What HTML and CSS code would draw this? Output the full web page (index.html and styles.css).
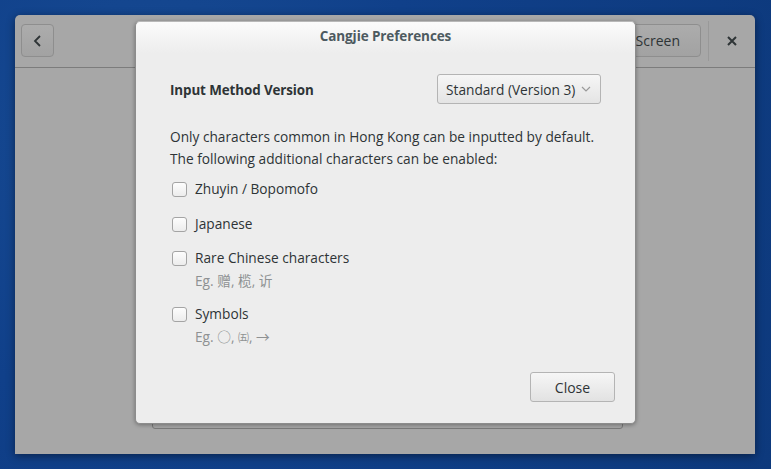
FILE: index.html
```html
<!DOCTYPE html>
<html>
<head>
<meta charset="utf-8">
<link rel="stylesheet" href="styles.css">
</head>
<body>
<div class="desktop">
  <div class="app">
    <div class="app-header">
      <button class="hbtn back-btn" aria-label="Back">
        <svg width="12" height="14" viewBox="0 0 12 14"><path d="M8 2 L3 7 L8 12" fill="none" stroke="#2e3436" stroke-width="1.8"/></svg>
      </button>
      <div class="spacer"></div>
      <button class="hbtn screen-btn">Full Screen</button>
      <div class="hsep"></div>
      <div class="close-x">
        <svg width="10" height="10" viewBox="0 0 10 10"><path d="M1 1 L9 9 M9 1 L1 9" stroke="#2e3436" stroke-width="2"/></svg>
      </div>
    </div>
    <div class="app-body">
      <div class="frame">
        <div class="frame-row"></div>
      </div>
    </div>
  </div>

  <div class="dialog">
    <div class="dialog-title">Cangjie Preferences</div>
    <div class="dialog-content">
      <div class="version-row">
        <span class="bold-label">Input Method Version</span>
        <div class="combo">
          <span>Standard (Version 3)</span>
          <svg width="10" height="6" viewBox="0 0 10 6"><path d="M1 1 L5 5 L9 1" fill="none" stroke="#9a9a9a" stroke-width="1.2"/></svg>
        </div>
      </div>
      <p class="intro">Only characters common in Hong Kong can be inputted by default.<br>The following additional characters can be enabled:</p>
      <div class="options">
        <div class="option first">
          <label class="check-row"><span class="checkbox"></span>Zhuyin / Bopomofo</label>
        </div>
        <div class="option">
          <label class="check-row"><span class="checkbox"></span>Japanese</label>
        </div>
        <div class="option">
          <label class="check-row"><span class="checkbox"></span>Rare Chinese characters</label>
          <div class="example">Eg. 赠, 榄, 䜣</div>
        </div>
        <div class="option">
          <label class="check-row"><span class="checkbox"></span>Symbols</label>
          <div class="example">Eg. ○, <span class="small">㈤</span>, →</div>
        </div>
      </div>
      <div class="actions">
        <button class="close-btn">Close</button>
      </div>
    </div>
  </div>
</div>
</body>
</html>
```

FILE: styles.css
```css
html, body {
  margin: 0;
  padding: 0;
}
body {
  width: 771px;
  height: 469px;
  overflow: hidden;
  font-family: "Open Sans", "Noto Sans CJK SC", sans-serif;
  font-size: 13.7px;
  color: #2e3436;
  background: radial-gradient(circle at 20% 30%, #184c94 0%, #10408a 40%, #0d397c 100%);
}
.desktop {
  position: relative;
  width: 771px;
  height: 469px;
  padding: 15px 16px 15px 15px;
  box-sizing: border-box;
}
.app {
  width: 740px;
  height: 439px;
  background: #a7a7a7;
  border-radius: 5px 5px 0 0;
  box-shadow: 0 2px 8px rgba(0,0,0,0.45);
  display: flex;
  flex-direction: column;
}
.app-header {
  height: 53px;
  box-sizing: border-box;
  border-bottom: 1px solid #7c7c7c;
  display: flex;
  align-items: center;
  padding: 0 0 0 6px;
}
.hbtn {
  height: 33px;
  box-sizing: border-box;
  border: 1px solid #8e8e8e;
  border-radius: 4px;
  background: linear-gradient(#acacac, #a2a2a2);
  font-family: inherit;
  font-size: 14px;
  color: #2e3436;
  padding: 0;
  margin-top: -1px;
}
.back-btn {
  width: 33px;
  display: flex;
  align-items: center;
  justify-content: center;
}
.spacer { flex: 1; }
.screen-btn {
  width: 140px;
  text-align: right;
  padding-right: 20px;
}
.hsep {
  width: 1px;
  height: 40px;
  background: #999;
  margin-left: 7px;
}
.close-x {
  width: 46px;
  display: flex;
  justify-content: center;
  align-items: center;
}
.app-body {
  flex: 1;
  display: flex;
  justify-content: center;
  align-items: flex-end;
  padding-bottom: 25px;
}
.frame {
  width: 471px;
  height: 120px;
  box-sizing: border-box;
  border: 1px solid #7a7a7a;
  border-radius: 0 0 3px 3px;
  margin-left: 5px;
  display: flex;
  align-items: flex-end;
}
.frame-row {
  flex: 1;
  height: 4px;
  border-top: 1px solid #8a8a8a;
}

/* dialog overlays the parent window */
.dialog {
  position: absolute;
  left: 135px;
  top: 21px;
  width: 501px;
  height: 403px;
  box-sizing: border-box;
  background: #ededed;
  border: 1px solid #8c8c8c;
  border-top-color: #b8b8b8;
  border-radius: 5px;
  box-shadow: 0 1px 4px rgba(0,0,0,0.35);
  display: flex;
  flex-direction: column;
}
.dialog-title {
  height: 31px;
  flex: none;
  box-sizing: border-box;
  padding-top: 4px;
  text-align: center;
  font-weight: bold;
  font-size: 13.5px;
  letter-spacing: -0.1px;
  color: #4d5a60;
  background: linear-gradient(#fbfbfb, #ededed);
  border-radius: 5px 5px 0 0;
  line-height: 20px;
}
.dialog-content {
  flex: 1;
  display: flex;
  flex-direction: column;
  padding: 21px 34px 21px 34px;
}
.version-row {
  display: flex;
  align-items: center;
  justify-content: space-between;
}
.bold-label {
  font-weight: bold;
  font-size: 13.4px;
  letter-spacing: -0.1px;
  padding-top: 2px;
}
.combo {
  width: 164px;
  height: 30px;
  box-sizing: border-box;
  border: 1px solid #b4b4b4;
  border-radius: 3px;
  background: linear-gradient(#f6f6f6, #e4e4e4);
  display: flex;
  align-items: center;
  justify-content: space-between;
  padding: 0 9px 0 8px;
}
.intro {
  margin: 22px 0 0 0;
  line-height: 22px;
  white-space: nowrap;
}
.options {
  margin-top: 8px;
  display: flex;
  flex-direction: column;
  gap: 12px;
}
.option.first {
  margin-bottom: 1px;
}
.check-row {
  display: flex;
  align-items: center;
  line-height: 22px;
}
.checkbox {
  width: 15px;
  height: 15px;
  box-sizing: border-box;
  border: 1px solid #a4a4a4;
  border-radius: 3px;
  background: linear-gradient(#fdfdfd, #ececec);
  margin: 0 8px 0 2px;
}
.example {
  color: #8e9192;
  line-height: 20px;
  margin: 2px 0 0 25px;
}
.example .small {
  font-size: 11px;
}
.actions {
  margin-top: auto;
  display: flex;
  justify-content: flex-end;
  margin-right: -14px;
}
.close-btn {
  width: 85px;
  height: 30px;
  box-sizing: border-box;
  border: 1px solid #b4b4b4;
  border-radius: 3px;
  background: linear-gradient(#f6f6f6, #e2e2e2);
  font-family: inherit;
  font-size: 14px;
  color: #2e3436;
}
```
